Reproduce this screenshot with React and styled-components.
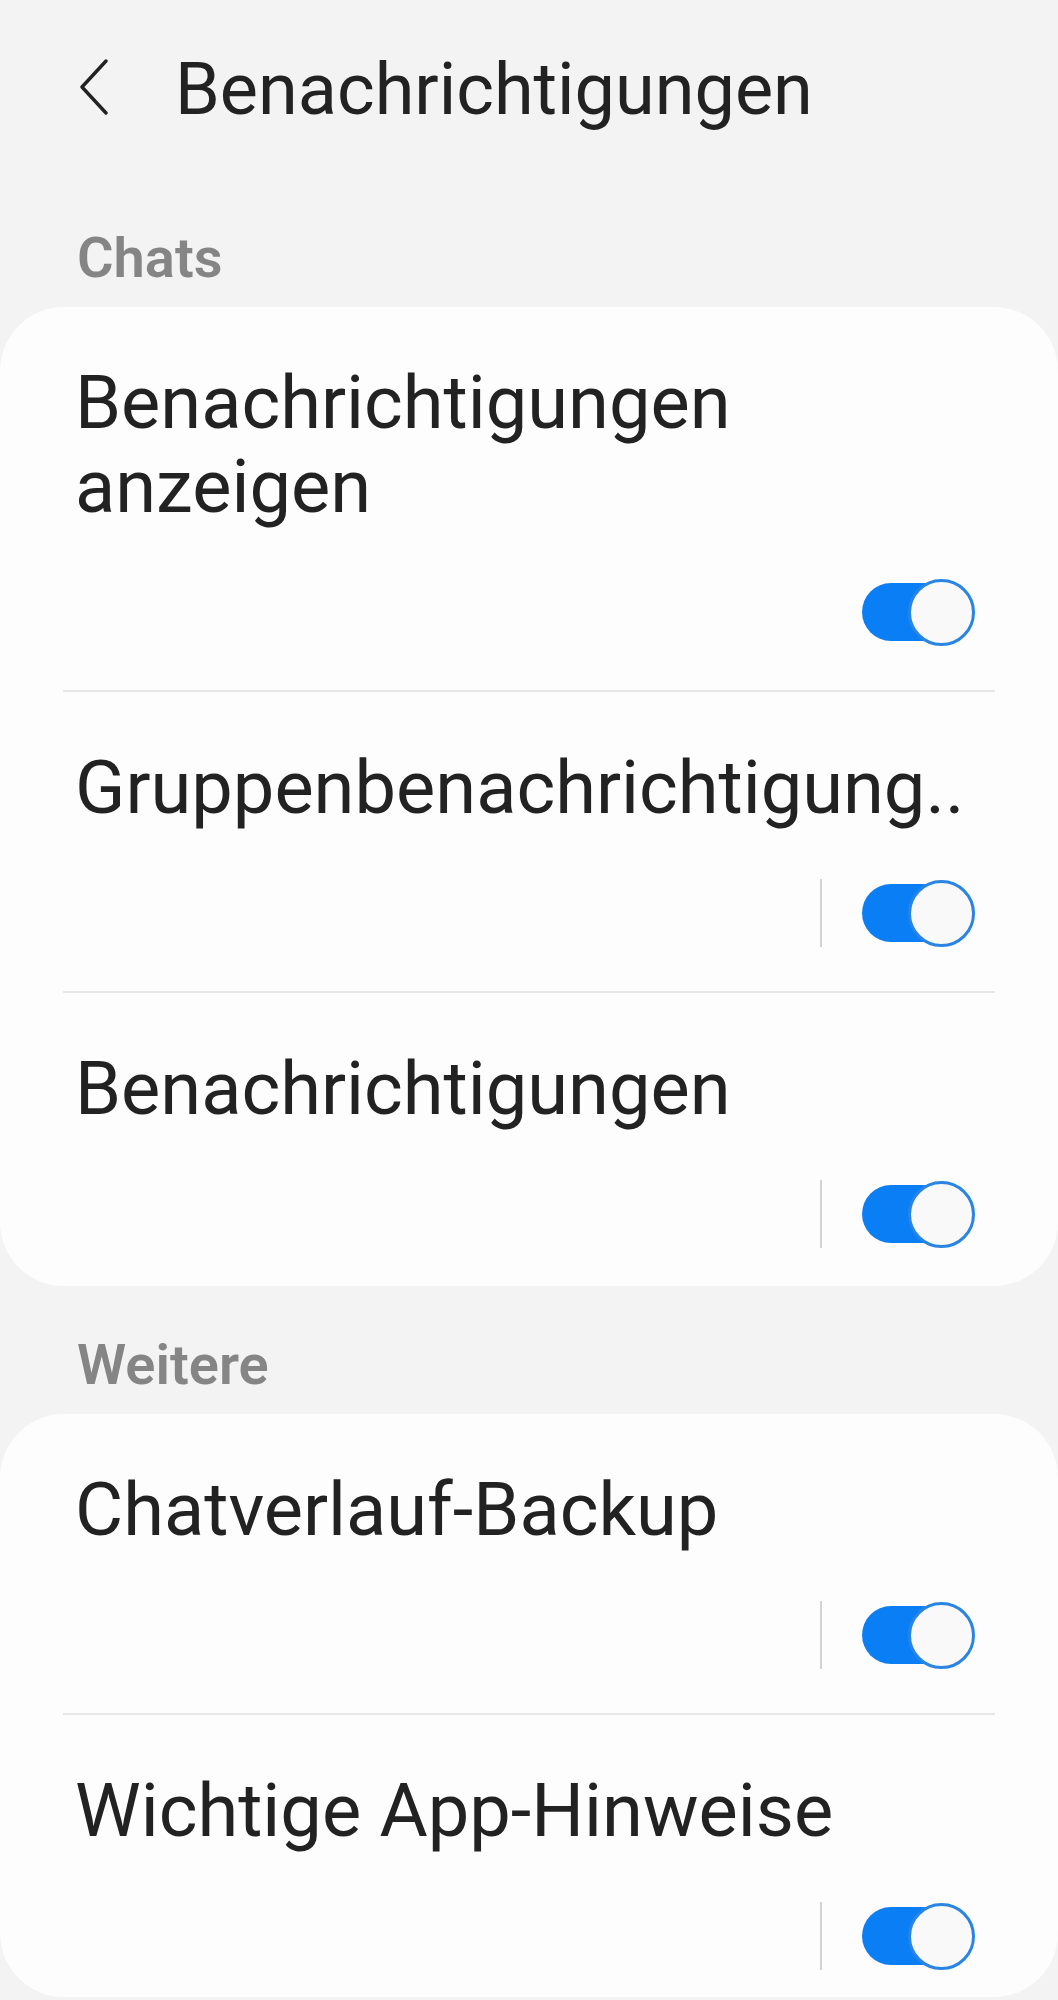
import styled, { createGlobalStyle } from 'styled-components'

const GlobalStyle = createGlobalStyle`
  html, body {
    margin: 0;
    padding: 0;
    background: #f3f3f3;
  }
  body {
    font-family: Roboto, "Liberation Sans", sans-serif;
    color: #222222;
  }
`

const Page = styled.div`
  width: 1058px;
  display: flex;
  flex-direction: column;
  background: #f3f3f3;
`

const TopBar = styled.header`
  height: 179px;
  display: flex;
  align-items: center;
  padding-left: 75px;
  gap: 60px;
  box-sizing: border-box;
`

const BackButton = styled.button`
  border: 0;
  background: none;
  padding: 0;
  width: 40px;
  height: 60px;
  display: flex;
  align-items: center;
  justify-content: center;
  margin-top: -4px;
`

const Title = styled.h1`
  margin: 0;
  font-size: 72px;
  font-weight: 400;
  line-height: 1;
  color: #222222;
`

const SectionLabel = styled.div`
  padding: 46px 0 16px 77px;
  font-size: 56px;
  line-height: 66px;
  font-weight: 600;
  color: #858585;
`

const Card = styled.section`
  background: #fdfdfd;
  border-radius: 64px;
  padding: 0 63px;
  display: flex;
  flex-direction: column;
`

const Row = styled.div`
  padding: 54px 20px ${(p) => p.$tail}px 12px;
  display: flex;
  flex-direction: column;
  gap: 50px;
  border-bottom: 2px solid #e7e7e7;
  &:last-child {
    border-bottom: 0;
  }
`

const RowText = styled.div`
  font-size: 74px;
  line-height: 84px;
  color: #222222;
  white-space: ${(p) => (p.$nowrap ? 'nowrap' : 'normal')};
`

const Controls = styled.div`
  display: flex;
  justify-content: flex-end;
  align-items: center;
  gap: 40px;
  height: 66px;
`

const Separator = styled.span`
  width: 2px;
  height: 68px;
  background: #d3d3d3;
`

const Switch = styled.span`
  position: relative;
  width: 113px;
  height: 66px;
  flex-shrink: 0;
`

const Track = styled.span`
  position: absolute;
  left: 0;
  top: 4px;
  width: 90px;
  height: 58px;
  border-radius: 29px;
  background: #0a7ff5;
`

const Knob = styled.span`
  position: absolute;
  right: 0;
  top: 0;
  width: 67px;
  height: 67px;
  box-sizing: border-box;
  border-radius: 50%;
  border: 3px solid #2a84e2;
  background: #f9f9f9;
`

const Toggle = () => (
  <Switch>
    <Track />
    <Knob />
  </Switch>
)

const SettingRow = ({ label, separator = true, nowrap, tail = 45 }) => (
  <Row $tail={tail}>
    <RowText $nowrap={nowrap}>{label}</RowText>
    <Controls>
      {separator && <Separator />}
      <Toggle />
    </Controls>
  </Row>
)

const App = () => {
  return (
    <>
      <GlobalStyle />
      <Page>
        <TopBar>
          <BackButton>
            <svg width="32" height="58" viewBox="0 0 32 58">
              <path
                d="M27 2 L3 28 L27 54"
                fill="none"
                stroke="#222"
                strokeWidth="3.4"
                strokeLinecap="round"
                strokeLinejoin="round"
              />
            </svg>
          </BackButton>
          <Title>Benachrichtigungen</Title>
        </TopBar>

        <SectionLabel>Chats</SectionLabel>
        <Card>
          <SettingRow label="Benachrichtigungen anzeigen" separator={false} />
          <SettingRow label="Gruppenbenachrichtigung.." nowrap />
          <SettingRow label="Benachrichtigungen" tail={39} />
        </Card>

        <SectionLabel>Weitere</SectionLabel>
        <Card>
          <SettingRow label="Chatverlauf-Backup" />
          <SettingRow label="Wichtige App-Hinweise" tail={28} />
        </Card>
      </Page>
    </>
  )
}

export default App
